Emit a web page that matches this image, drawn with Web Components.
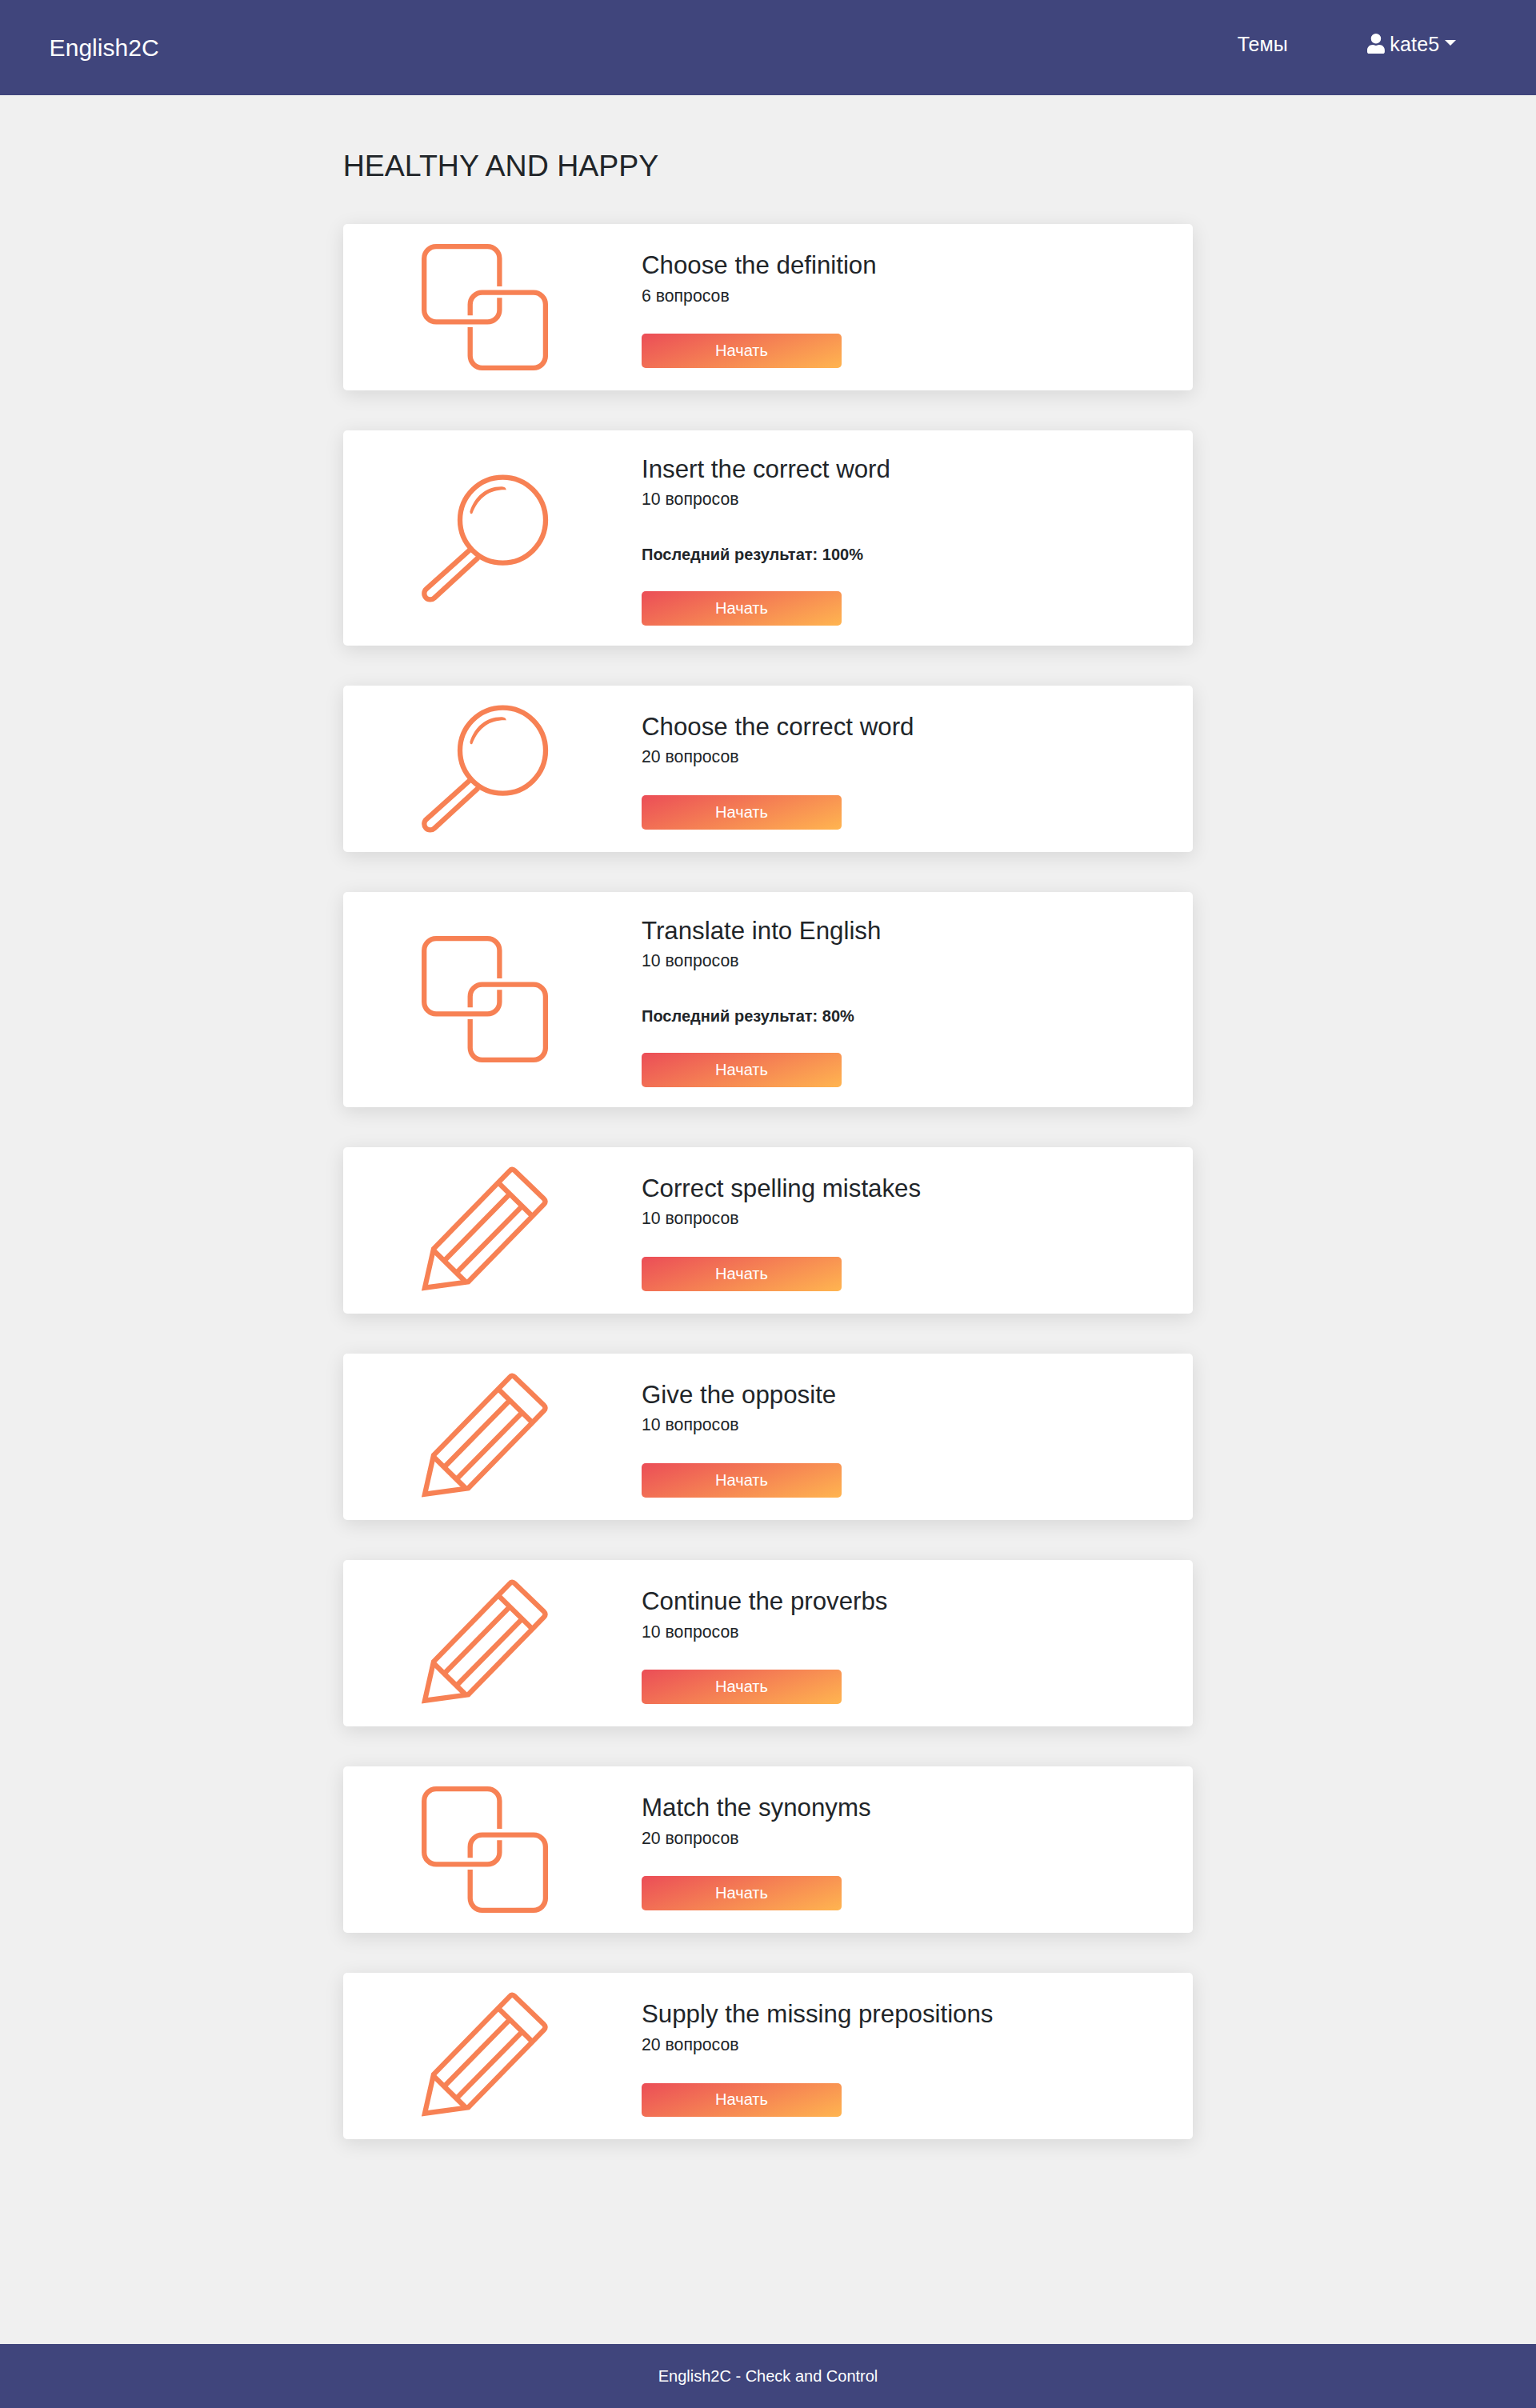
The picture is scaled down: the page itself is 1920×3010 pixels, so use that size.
<!DOCTYPE html>
<html lang="ru">
<head>
<meta charset="utf-8">
<title>English2C</title>
<style>
body{margin:0;background:#f0f0f0;color:#212529;font:20px/1.5 "Liberation Sans",Arial,sans-serif}
</style>
</head>
<body>
<app-page>
  <site-header slot="header" brand="English2C" link="Темы" user="kate5"></site-header>
  <span slot="title">HEALTHY AND HAPPY</span>
  <task-card icon="squares" count="6">Choose the definition</task-card>
  <task-card icon="lens" count="10" result="100%">Insert the correct word</task-card>
  <task-card icon="lens" count="20">Choose the correct word</task-card>
  <task-card icon="squares" count="10" result="80%">Translate into English</task-card>
  <task-card icon="pencil" count="10">Correct spelling mistakes</task-card>
  <task-card icon="pencil" count="10">Give the opposite</task-card>
  <task-card icon="pencil" count="10">Continue the proverbs</task-card>
  <task-card icon="squares" count="20">Match the synonyms</task-card>
  <task-card icon="pencil" count="20">Supply the missing prepositions</task-card>
  <site-footer slot="footer">English2C - Check and Control</site-footer>
</app-page>
<script>
class Base extends HTMLElement{
  connectedCallback(){
    if(this.shadowRoot)return;
    this.attachShadow({mode:'open'}).innerHTML='<style>*{box-sizing:border-box}'+this.css()+'</style>'+this.html();
  }
}
customElements.define('app-page',class extends Base{
  css(){return `
    :host{display:flex;flex-direction:column;height:3010px}
    main{flex:1;width:1062.5px;margin:0 auto;padding-top:65.5px}
    h1{margin:0 0 50.65px;font-size:37.5px;line-height:45px;font-weight:400;white-space:nowrap}
    .list{display:flex;flex-direction:column;gap:50px}`}
  html(){return `<slot name="header"></slot><main><h1><slot name="title"></slot></h1><div class="list"><slot></slot></div></main><slot name="footer"></slot>`}
});
customElements.define('site-header',class extends Base{
  css(){return `
    :host{display:flex;justify-content:space-between;align-items:flex-start;height:119px;background:#40457c;color:#fff;padding:36.6px 100.2px 0 61.6px;box-sizing:border-box}
    .brand{font-size:30px;line-height:45px;letter-spacing:.05px;padding-top:.4px}
    nav{display:flex;font-size:25px;line-height:37.5px;gap:99.6px}
    .user{display:flex;letter-spacing:.2px}
    svg{width:21.9px;height:25px;margin:5.4px 6.1px 0 0;fill:#fff}
    i{width:0;height:0;margin:13.4px 0 0 6.4px;border:7.5px solid transparent;border-top-color:#fff;border-bottom:0}`}
  html(){const a=n=>this.getAttribute(n);return `<div class="brand">${a('brand')}</div><nav><span>${a('link')}</span><span class="user"><svg viewBox="0 0 448 512"><path d="M224 256a128 128 0 1 0 0-256 128 128 0 1 0 0 256zm89.600 32h-16.700a174.080 174.080 0 0 1-145.800 0h-16.700C60.200 288 0 348.200 0 422.400V464c0 26.500 21.500 48 48 48h352c26.500 0 48-21.500 48-48v-41.600c0-74.200-60.200-134.400-134.400-134.400z"/></svg><span>${a('user')}</span><i></i></span></nav>`}
});
customElements.define('site-footer',class extends Base{
  css(){return `:host{display:flex;justify-content:center;height:80px;padding-top:25px;box-sizing:border-box;background:#40457c;color:#fff}`}
  html(){return `<span><slot></slot></span>`}
});
const ICONS={
  squares:`<path d="M97.400 53V18.200a15 15 0 0 0-15-15H18.200a15 15 0 0 0-15 15v64.200a15 15 0 0 0 15 15h64.200a15 15 0 0 0 15-15V67.300M60.700 104v35.800a15 15 0 0 0 15 15h64.200a15 15 0 0 0 15-15V75.700a15 15 0 0 0-15-15H75.700a15 15 0 0 0-15 15v13.600"/>`,
  lens:`<circle cx="101.500" cy="56.100" r="53.500"/><path d="M60 93.700L5.700 142.400a7.500 7.500 0 0 0 10.300 11L70.700 103.100"/><path transform="translate(-27 -23.600) scale(.33333)" fill="currentColor" stroke="none" d="M262 207C280 150 325 111 386 114Q398 116 398 126C340 124 297 150 271 214Q264 220 262 207Z"/>`,
  pencil:`<g transform="translate(-27 -18.700) scale(.33333)" stroke-width="19"><path d="M93 508L126 362L411 70Q420 59 430 69L539 174Q550 185 540 195L256 486Z"/><path d="M370 115L495 238M126 368L247 487M410 158L168 405M457 203L214 450"/></g>`
};
customElements.define('task-icon',class extends Base{
  css(){return `:host{display:block;width:158.125px;height:158.125px;color:#f78154}svg{display:block;width:100%;height:100%;overflow:visible}`}
  html(){return `<svg viewBox="0 0 158.125 158.125" fill="none" stroke="currentColor" stroke-width="6.300">${ICONS[this.getAttribute('name')]}</svg>`}
});
customElements.define('start-button',class extends Base{
  css(){return `
    :host{display:block;width:250px}
    button{display:block;width:100%;height:42.5px;padding:0 0 1px;border:0;border-radius:5px;background:linear-gradient(160deg,#eb4d57,#ffb550);color:#fff;font:inherit;line-height:30px}`}
  html(){return `<button><slot></slot></button>`}
});
customElements.define('task-card',class extends Base{
  css(){return `
    :host{display:flex;align-items:center;padding:25px 0 25px 98.25px;background:#fff;border-radius:5px;box-shadow:0 5px 25px rgba(0,0,0,.11)}
    .body{margin-left:116.900px;padding-top:4.400px;white-space:nowrap}
    h2{margin:0 0 4.100px;font-size:31.250px;line-height:37.500px;font-weight:400}
    p{margin:0;font-size:21.250px;line-height:31.875px}
    .res{margin-top:36.700px;font-size:20px;line-height:30px;font-weight:700}
    start-button{margin-top:30.900px}
    .res+start-button{margin-top:31.675px}`}
  html(){const r=this.getAttribute('result');return `<task-icon name="${this.getAttribute('icon')}"></task-icon><div class="body"><h2><slot></slot></h2><p>${this.getAttribute('count')} вопросов</p>${r?`<p class="res">Последний результат: ${r}</p>`:''}<start-button>Начать</start-button></div>`}
});
</script>
</body>
</html>
